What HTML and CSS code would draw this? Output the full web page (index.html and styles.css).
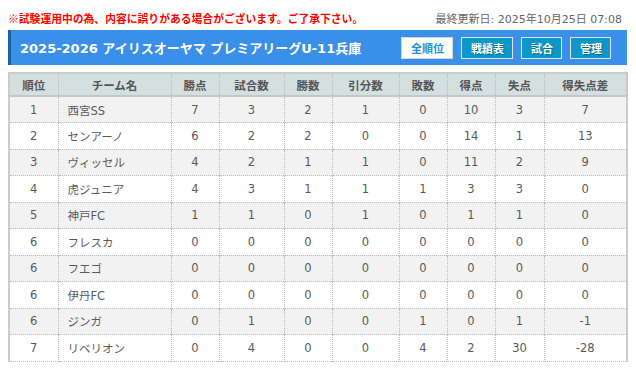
FILE: index.html
```html
<!DOCTYPE html>
<html lang="ja">
<head>
<meta charset="utf-8">
<link rel="stylesheet" href="styles.css">
</head>
<body>
<div class="page">
  <div class="topline">
    <span class="notice">※試験運用中の為、内容に誤りがある場合がございます。ご了承下さい。</span>
    <span class="updated">最終更新日: 2025年10月25日 07:08</span>
  </div>
  <div class="banner">
    <h1 class="title">2025-2026 アイリスオーヤマ プレミアリーグU-11兵庫</h1>
    <nav class="btns">
      <span class="btn active">全順位</span>
      <span class="btn">戦績表</span>
      <span class="btn">試合</span>
      <span class="btn">管理</span>
    </nav>
  </div>
  <table class="standings">
    <colgroup>
      <col style="width:49px"><col style="width:113px"><col style="width:48px"><col style="width:65px"><col style="width:48px"><col style="width:67px"><col style="width:48px"><col style="width:48px"><col style="width:49px"><col style="width:83px">
    </colgroup>
    <thead>
      <tr><th>順位</th><th>チーム名</th><th>勝点</th><th>試合数</th><th>勝数</th><th>引分数</th><th>敗数</th><th>得点</th><th>失点</th><th>得失点差</th></tr>
    </thead>
    <tbody>
      <tr><td>1</td><td class="team">西宮SS</td><td>7</td><td>3</td><td>2</td><td>1</td><td>0</td><td>10</td><td>3</td><td>7</td></tr>
      <tr><td>2</td><td class="team">センアーノ</td><td>6</td><td>2</td><td>2</td><td>0</td><td>0</td><td>14</td><td>1</td><td>13</td></tr>
      <tr><td>3</td><td class="team">ヴィッセル</td><td>4</td><td>2</td><td>1</td><td>1</td><td>0</td><td>11</td><td>2</td><td>9</td></tr>
      <tr><td>4</td><td class="team">虎ジュニア</td><td>4</td><td>3</td><td>1</td><td>1</td><td>1</td><td>3</td><td>3</td><td>0</td></tr>
      <tr><td>5</td><td class="team">神戸FC</td><td>1</td><td>1</td><td>0</td><td>1</td><td>0</td><td>1</td><td>1</td><td>0</td></tr>
      <tr><td>6</td><td class="team">フレスカ</td><td>0</td><td>0</td><td>0</td><td>0</td><td>0</td><td>0</td><td>0</td><td>0</td></tr>
      <tr><td>6</td><td class="team">フエゴ</td><td>0</td><td>0</td><td>0</td><td>0</td><td>0</td><td>0</td><td>0</td><td>0</td></tr>
      <tr><td>6</td><td class="team">伊丹FC</td><td>0</td><td>0</td><td>0</td><td>0</td><td>0</td><td>0</td><td>0</td><td>0</td></tr>
      <tr><td>6</td><td class="team">ジンガ</td><td>0</td><td>1</td><td>0</td><td>0</td><td>1</td><td>0</td><td>1</td><td>-1</td></tr>
      <tr><td>7</td><td class="team">リベリオン</td><td>0</td><td>4</td><td>0</td><td>0</td><td>4</td><td>2</td><td>30</td><td>-28</td></tr>
    </tbody>
  </table>
</div>
</body>
</html>
```
FILE: styles.css
```css
* { box-sizing: border-box; }
html, body { margin: 0; padding: 0; background: #fff; }
body {
  font-family: "DejaVu Sans", "Noto Sans CJK JP", sans-serif;
  color: #555;
}
.page { padding: 0 9px 0 8px; }
.topline {
  height: 30px;
  display: flex;
  justify-content: space-between;
  align-items: center;
  padding-top: 6px;
}
.notice {
  color: #f00;
  font-weight: bold;
  font-size: 10.8px;
  font-family: "Noto Sans CJK JP", sans-serif;
}
.updated {
  color: #666;
  font-size: 11px;
  padding-right: 5px;
}
.banner {
  height: 35px;
  background: #3a8fe8;
  border-left: 3px solid #1b5fa6;
  display: flex;
  align-items: center;
  justify-content: space-between;
  padding: 0 16px 0 9px;
}
.title {
  margin: 0;
  color: #fff;
  font-size: 13px;
  font-weight: bold;
}
.btns { display: flex; gap: 8px; }
.btn {
  height: 22px;
  padding: 0 8px 0 9px;
  display: flex;
  align-items: center;
  background: #0b98c8;
  border: 1px solid #dfe3e6;
  color: #fff;
  font-size: 11px;
  font-weight: bold;
  font-family: "Noto Sans CJK JP", sans-serif;
  text-shadow: 1px 1px 1px rgba(0,0,0,0.35);
}
.btn.active {
  background: #fff;
  color: #1a95cf;
  text-shadow: none;
  border-color: #d6d6d6;
}
.standings {
  margin-top: 7px;
  width: 619px;
  border-collapse: collapse;
  table-layout: fixed;
  font-size: 11.5px;
  border-left: 2px solid #ccc;
  border-right: 2px solid #ccc;
  border-bottom: 1px dotted #bbb;
}
.standings th {
  background: #d4e0e0;
  font-weight: bold;
  color: #555;
  height: 23px;
  padding: 0;
  border-top: 2px solid #ccc;
  border-bottom: 2px solid #c6c6c6;
  border-left: 1px dotted #bbb;
  text-align: center;
  font-family: "Noto Sans CJK JP", sans-serif;
}
.standings td {
  height: 26.5px;
  padding: 0;
  text-align: center;
  color: #5a5a5a;
  border-left: 1px dotted #bbb;
  border-top: 1px dotted #bbb;
}
.standings th:first-child, .standings td:first-child { border-left: none; }
.standings td.team {
  text-align: left;
  padding-left: 9px;
}
.standings tbody tr:nth-child(odd) { background: #f2f2f2; }
.standings tbody tr:nth-child(even) { background: #fff; }
```
